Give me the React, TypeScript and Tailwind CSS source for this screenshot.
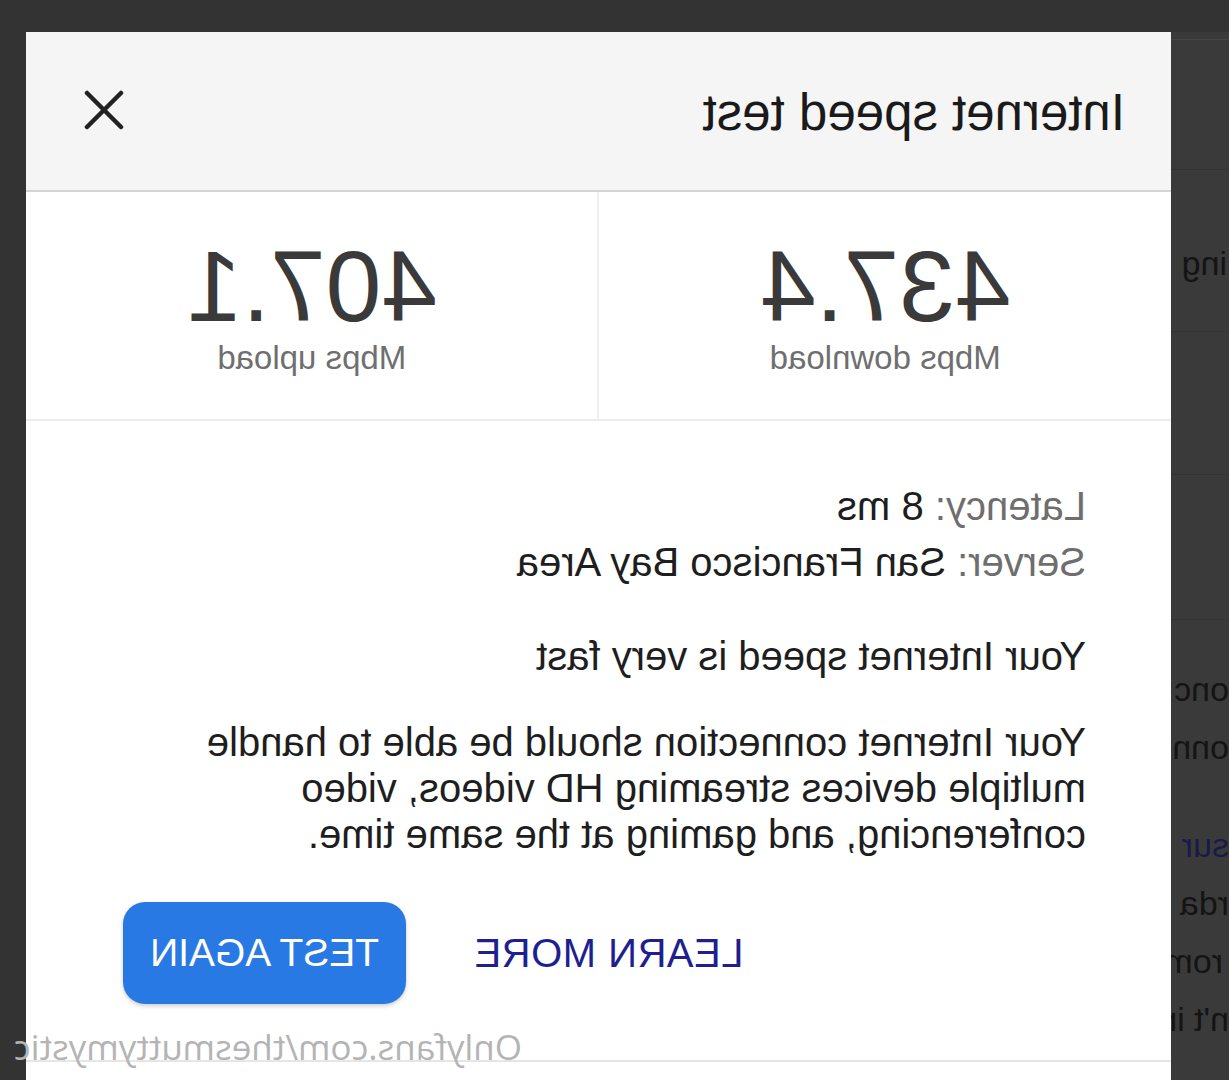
import React from 'react'

const SpeedStat = ({ value, label }: { value: string; label: string }) => (
  <div className="flex-1 flex flex-col items-center pt-[44px]">
    <div className="text-[100px] leading-none text-[#3a3a3a]">{value}</div>
    <div className="mt-[2px] text-[33px] leading-[40px] text-[#6f6f6f]">{label}</div>
  </div>
)

export default function App() {
  return (
    <div className="relative w-[1229px] h-[1080px] overflow-hidden bg-[#333333] font-['Liberation_Sans',Arial,sans-serif] -scale-x-100">
      <div className="flex h-full">
        {/* page behind the overlay, only its edge shows */}
        <div className="w-[58px] shrink-0 flex flex-col">
          <div className="h-[32px] shrink-0" />
          <div className="flex-1 flex flex-col bg-[#3a3a3a] overflow-hidden text-[34px] leading-[40px] whitespace-nowrap text-[#141414]">
            <div className="h-[8px] border-b border-[#454545]" />
            <div className="h-[130px] border-b border-[#333]" />
            <div className="h-[162px] border-b border-[#333] flex items-center pt-[24px]">
              <span className="pl-[2px]">ing</span>
            </div>
            <div className="h-[143px] border-b border-[#333]" />
            <div className="h-[145px] border-b border-[#333]" />
            <div className="pt-[40px] flex flex-col">
              <span className="leading-[58px]">onc</span>
              <span className="leading-[58px]">onn</span>
              <span className="text-[#1a1a48] leading-[58px] mt-[40px]">sur</span>
              <span className="leading-[58px]">rda</span>
              <span className="leading-[58px] pl-[6px]">rom</span>
              <span className="leading-[58px]">n't in</span>
            </div>
          </div>
        </div>

        {/* dialog */}
        <div className="w-[1145px] shrink-0 mt-[32px] bg-white flex flex-col">
          <div className="h-[160px] shrink-0 bg-[#f5f5f5] border-b-2 border-[#d4d4d4] flex items-center justify-between pl-[46px] pr-[58px]">
            <h1 className="text-[51px] leading-none text-[#1a1a1a] pt-[2px]">Internet speed test</h1>
            <svg width="40" height="40" viewBox="0 0 40 40" className="mt-[-2px]">
              <line x1="3" y1="3" x2="37" y2="37" stroke="#222" strokeWidth="4.5" strokeLinecap="round" />
              <line x1="37" y1="3" x2="3" y2="37" stroke="#222" strokeWidth="4.5" strokeLinecap="round" />
            </svg>
          </div>

          <div className="h-[229px] shrink-0 flex border-b-2 border-[#ececec]">
            <SpeedStat value="437.4" label="Mbps download" />
            <div className="w-[2px] bg-[#efefef]" />
            <SpeedStat value="407.1" label="Mbps upload" />
          </div>

          <div className="pl-[85px] pt-[57px] text-[40px] text-[#1e1e1e]">
            <div className="leading-[56px]">
              <span className="text-[#6e6e6e]">Latency:</span> 8 ms
            </div>
            <div className="leading-[56px]">
              <span className="text-[#6e6e6e]">Server:</span> San Francisco Bay Area
            </div>
            <p className="mt-[43px] leading-[46px]">Your Internet speed is very fast</p>
            <p className="mt-[40px] leading-[46px] w-[940px]">
              Your Internet connection should be able to handle multiple devices streaming HD videos, video conferencing, and gaming at the same time.
            </p>
            <div className="mt-[45px] flex items-center justify-end w-[963px] gap-[68px]">
              <button className="text-[40px] text-[#1f1f8f] tracking-[0.5px]">LEARN MORE</button>
              <button className="w-[283px] h-[102px] rounded-[22px] bg-[#2979e4] text-white text-[39px] shadow-[0_2px_4px_rgba(0,0,0,0.2)]">
                TEST AGAIN
              </button>
            </div>
          </div>
          <div className="mt-[56px] border-b-2 border-[#e6e6e6]" />
        </div>

        <div className="flex-1" />
      </div>

      {/* watermark */}
      <div className="absolute left-[707px] top-[1021px] text-[35px] text-[#b4b4b4] font-['Open_Sans',sans-serif] whitespace-nowrap">
        Onlyfans.com/thesmuttymystic
      </div>
    </div>
  )
}
